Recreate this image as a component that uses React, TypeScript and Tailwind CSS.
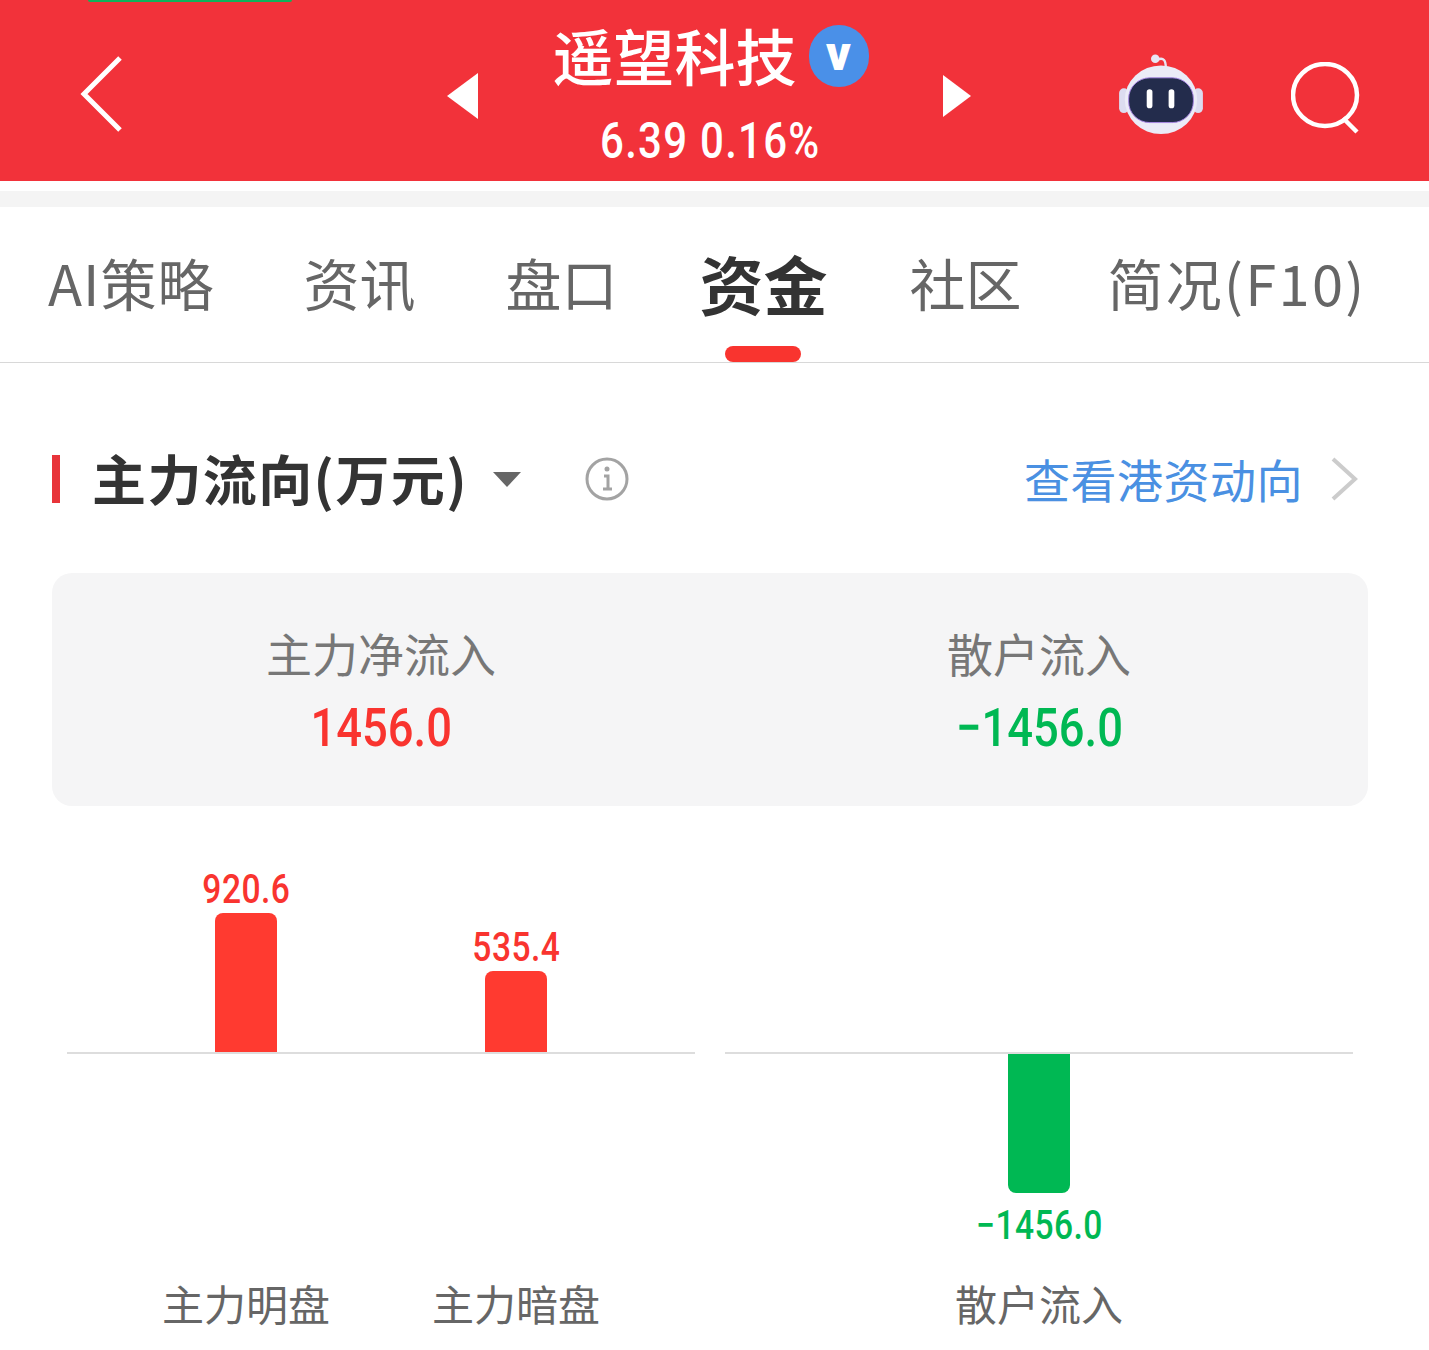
const cjk = "font-['Noto_Sans_CJK_SC','Roboto',sans-serif]";
const narrow = "inline-block font-['Roboto',sans-serif] font-medium scale-x-[0.84]";

function Robot() {
  return (
    <svg width="86" height="80" viewBox="0 0 90 84">
      <path d="M41 6 C48 3 50 7 50 14" fill="none" stroke="#e8e6f4" strokeWidth="2.5" />
      <circle cx="39" cy="5" r="4.5" fill="#e8e6f4" />
      <rect x="1" y="36" width="10" height="26" rx="5" fill="#dcdcf0" />
      <rect x="79" y="36" width="10" height="26" rx="5" fill="#dcdcf0" />
      <ellipse cx="45" cy="48" rx="38" ry="36" fill="#ebebf7" />
      <rect x="11" y="25" width="68" height="47" rx="22" fill="#232c4c" stroke="#a987e6" strokeWidth="1" />
      <rect x="30" y="37" width="6" height="20" rx="3" fill="#fff" />
      <rect x="53" y="37" width="6" height="20" rx="3" fill="#fff" />
    </svg>
  );
}

function Tab({ label, active, className }: { label: string; active?: boolean; className?: string }) {
  return (
    <div className={`relative h-full flex items-center pb-[6px] ${className}`}>
      <span className={active ? "text-[64px] font-bold text-[#333]" : "text-[56px] text-[#666]"}>{label}</span>
      {active && <div className="absolute bottom-0 left-1/2 -translate-x-1/2 w-[76px] h-[16px] rounded-full bg-[#f9342f]" />}
    </div>
  );
}

function Bar({ value, height }: { value: string; height: number }) {
  return (
    <div className="w-[270px] h-full flex flex-col items-center justify-end">
      <span className={`text-[40px] tracking-[0.5px] leading-[44px] mb-[1px] text-[#f9342f] ${narrow}`}>{value}</span>
      <div className="w-[62px] bg-[#ff3a30] rounded-t-[8px]" style={{ height }} />
    </div>
  );
}

export default function App() {
  return (
    <div className={`w-[1429px] h-[1350px] bg-white overflow-hidden ${cjk}`}>
      <header className="relative h-[181px] bg-[#f2323a] flex items-center text-white">
        <div className="absolute top-0 left-[88px] w-[204px] h-[2px] rounded-b bg-[#10b25a]" />
        <svg className="ml-[76px] mt-[7px]" width="50" height="80" viewBox="0 0 50 80" fill="none" stroke="#fff" strokeWidth="5">
          <path d="M44 4 L8 40 L44 76" />
        </svg>
        <div className="ml-[321px] mt-[11px] w-0 h-0 border-y-[23px] border-y-transparent border-r-[31px] border-r-white" />
        <div className="w-[465px] self-stretch pt-[23px] flex flex-col items-center">
          <div className="flex items-center gap-[12px] h-[66px]">
            <span className="text-[61px] leading-none font-medium -mt-[3px]">遥望科技</span>
            <span className="w-[60px] h-[62px] rounded-full bg-[#4a90e8] flex items-center justify-center text-[48px] font-black font-['Roboto',sans-serif] leading-none pb-[4px]">v</span>
          </div>
          <div className={`text-[50px] tracking-[1.5px] leading-[54px] mt-[25px] ${narrow}`}>6.39 0.16%</div>
        </div>
        <div className="mt-[11px] w-0 h-0 border-y-[21px] border-y-transparent border-l-[28px] border-l-white" />
        <div className="ml-[147px] mt-[7px]"><Robot /></div>
        <svg className="ml-[87px] mt-[14px]" width="72" height="72" viewBox="0 0 72 72" fill="none" stroke="#fff" strokeWidth="4.5">
          <ellipse cx="34" cy="33" rx="32" ry="31" />
          <path d="M52 56 L66 70" />
        </svg>
      </header>
      <div className="h-[10px]" />
      <div className="h-[16px] bg-[#f4f4f4]" />
      <nav className="h-[156px] border-b border-[#d8d8d8] flex items-stretch pl-[48px]">
        <Tab label="AI策略" className="tracking-[1px]" />
        <Tab label="资讯" className="ml-[89px]" />
        <Tab label="盘口" className="ml-[90px]" />
        <Tab label="资金" active className="ml-[82px]" />
        <Tab label="社区" className="ml-[82px]" />
        <Tab label="简况(F10)" className="ml-[86px] tracking-[2.3px]" />
      </nav>
      <section className="px-[52px]">
        <div className="h-[210px] flex items-center pt-[22px]">
          <div className="w-[8px] h-[48px] bg-[#e8343a] mr-[32px]" />
          <span className="text-[54px] font-bold text-[#333] tracking-[1.4px] -mt-[3px]">主力流向(万元)</span>
          <div className="ml-[25px] w-0 h-0 border-x-[14px] border-x-transparent border-t-[15px] border-t-[#666]" />
          <svg className="ml-[64px]" width="44" height="44" viewBox="0 0 44 44" fill="none" stroke="#a3a3a3" strokeWidth="3">
            <circle cx="22" cy="22" r="20" />
            <circle cx="22" cy="12" r="2.5" fill="#a3a3a3" stroke="none" />
            <path d="M19 19h4v13M18 32h9" />
          </svg>
          <span className="ml-auto text-[46px] tracking-[0.5px] text-[#4a90e2] -mt-[2px]">查看港资动向</span>
          <svg className="ml-[26px] mr-[18px]" width="30" height="46" viewBox="0 0 30 46" fill="none" stroke="#ccc" strokeWidth="4">
            <path d="M4 3 L26 23 L4 43" />
          </svg>
        </div>
        <div className="h-[233px] w-[1316px] rounded-[20px] bg-[#f5f5f6] grid grid-cols-2 text-center">
          <div className="pt-[50px]">
            <div className="text-[46px] leading-[66px] -mt-[4px] text-[#777]">主力净流入</div>
            <div className={`text-[54px] leading-[72px] mt-[7px] text-[#f9342f] ${narrow}`}>1456.0</div>
          </div>
          <div className="pt-[50px]">
            <div className="text-[46px] leading-[66px] -mt-[4px] text-[#777]">散户流入</div>
            <div className={`text-[54px] leading-[72px] mt-[7px] text-[#00b853] ${narrow}`}>−1456.0</div>
          </div>
        </div>
      </section>
      <section className="flex gap-[30px] pl-[67px] mt-[8px]">
        <div className="w-[628px]">
          <div className="h-[240px] flex justify-center border-b-2 border-[#ddd]">
            <Bar value="920.6" height={139} />
            <Bar value="535.4" height={81} />
          </div>
          <div className="h-[219px]" />
          <div className="flex justify-center text-[42px] leading-[60px] text-[#666]">
            <div className="w-[270px] text-center">主力明盘</div>
            <div className="w-[270px] text-center">主力暗盘</div>
          </div>
        </div>
        <div className="w-[628px]">
          <div className="h-[240px] border-b-2 border-[#ddd]" />
          <div className="h-[219px] flex flex-col items-center">
            <div className="w-[62px] h-[139px] shrink-0 bg-[#00b853] rounded-b-[8px]" />
            <span className={`text-[40px] tracking-[0.5px] leading-[44px] mt-[11px] text-[#00b853] ${narrow}`}>−1456.0</span>
          </div>
          <div className="text-center text-[42px] leading-[60px] text-[#666]">散户流入</div>
        </div>
      </section>
    </div>
  );
}
